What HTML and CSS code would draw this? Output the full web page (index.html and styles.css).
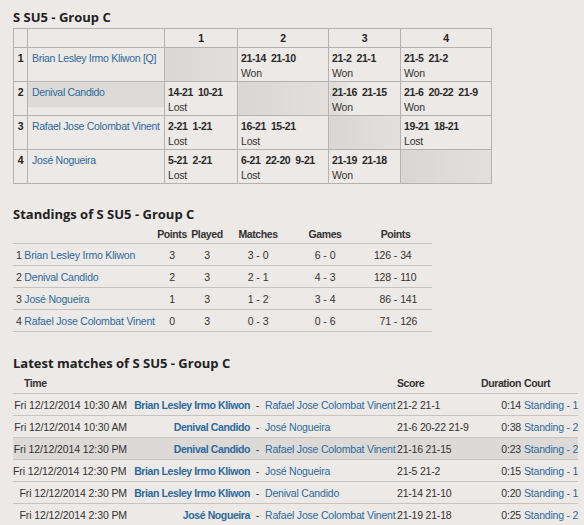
FILE: index.html
```html
<!DOCTYPE html>
<html>
<head>
<meta charset="utf-8">
<link rel="stylesheet" href="styles.css">
</head>
<body>
<h2 class="title">S SU5 - Group C</h2>
<table class="draw">
  <colgroup>
    <col class="c-num"><col class="c-name"><col class="c-s1"><col class="c-s2"><col class="c-s3"><col class="c-s4">
  </colgroup>
  <thead>
    <tr><th></th><th></th><th>1</th><th>2</th><th>3</th><th>4</th></tr>
  </thead>
  <tbody>
    <tr>
      <td class="num">1</td><td class="name"><a href="#">Brian Lesley Irmo Kliwon [Q]</a></td>
      <td class="self"></td>
      <td><b>21-14&nbsp; 21-10</b><br>Won</td>
      <td><b>21-2&nbsp; 21-1</b><br>Won</td>
      <td><b>21-5&nbsp; 21-2</b><br>Won</td>
    </tr>
    <tr>
      <td class="num">2</td><td class="name hover"><a href="#">Denival Candido</a></td>
      <td><b>14-21&nbsp; 10-21</b><br>Lost</td>
      <td class="self"></td>
      <td class="hover-edge"><b>21-16&nbsp; 21-15</b><br>Won</td>
      <td><b>21-6&nbsp; 20-22&nbsp; 21-9</b><br>Won</td>
    </tr>
    <tr>
      <td class="num">3</td><td class="name"><a href="#">Rafael Jose Colombat Vinent</a></td>
      <td><b>2-21&nbsp; 1-21</b><br>Lost</td>
      <td><b>16-21&nbsp; 15-21</b><br>Lost</td>
      <td class="self"></td>
      <td><b>19-21&nbsp; 18-21</b><br>Lost</td>
    </tr>
    <tr>
      <td class="num">4</td><td class="name"><a href="#">José Nogueira</a></td>
      <td><b>5-21&nbsp; 2-21</b><br>Lost</td>
      <td><b>6-21&nbsp; 22-20&nbsp; 9-21</b><br>Lost</td>
      <td><b>21-19&nbsp; 21-18</b><br>Won</td>
      <td class="self"></td>
    </tr>
  </tbody>
</table>

<h2 class="title sec">Standings of S SU5 - Group C</h2>
<table class="standings">
  <colgroup>
    <col class="s-name"><col class="s-pts"><col class="s-pl"><col class="s-m"><col class="s-g"><col class="s-p">
  </colgroup>
  <thead>
    <tr><th></th><th>Points</th><th>Played</th><th>Matches</th><th>Games</th><th>Points</th></tr>
  </thead>
  <tbody>
    <tr><td class="pname">1 <a href="#">Brian Lesley Irmo Kliwon</a></td><td>3</td><td>3</td>
      <td><span class="pair"><span class="l">3</span><span class="d">-</span><span class="r">0</span></span></td>
      <td><span class="pair"><span class="l">6</span><span class="d">-</span><span class="r">0</span></span></td>
      <td><span class="pair"><span class="l">126</span><span class="d">-</span><span class="r">34</span></span></td></tr>
    <tr><td class="pname">2 <a href="#">Denival Candido</a></td><td>2</td><td>3</td>
      <td><span class="pair"><span class="l">2</span><span class="d">-</span><span class="r">1</span></span></td>
      <td><span class="pair"><span class="l">4</span><span class="d">-</span><span class="r">3</span></span></td>
      <td><span class="pair"><span class="l">128</span><span class="d">-</span><span class="r">110</span></span></td></tr>
    <tr><td class="pname">3 <a href="#">José Nogueira</a></td><td>1</td><td>3</td>
      <td><span class="pair"><span class="l">1</span><span class="d">-</span><span class="r">2</span></span></td>
      <td><span class="pair"><span class="l">3</span><span class="d">-</span><span class="r">4</span></span></td>
      <td><span class="pair"><span class="l">86</span><span class="d">-</span><span class="r">141</span></span></td></tr>
    <tr><td class="pname">4 <a href="#">Rafael Jose Colombat Vinent</a></td><td>0</td><td>3</td>
      <td><span class="pair"><span class="l">0</span><span class="d">-</span><span class="r">3</span></span></td>
      <td><span class="pair"><span class="l">0</span><span class="d">-</span><span class="r">6</span></span></td>
      <td><span class="pair"><span class="l">71</span><span class="d">-</span><span class="r">126</span></span></td></tr>
  </tbody>
</table>

<h2 class="title sec2">Latest matches of S SU5 - Group C</h2>
<table class="matches">
  <colgroup>
    <col class="m-time"><col class="m-p1"><col class="m-sep"><col class="m-p2"><col class="m-score"><col class="m-dur"><col class="m-court">
  </colgroup>
  <thead>
    <tr><th class="time">Time</th><th></th><th></th><th></th><th class="score">Score</th><th class="dur">Duration</th><th class="court">Court</th></tr>
  </thead>
  <tbody>
    <tr><td class="time">Fri 12/12/2014 10:30 AM</td><td class="p1"><a href="#">Brian Lesley Irmo Kliwon</a></td><td class="sep">-</td><td class="p2"><a href="#">Rafael Jose Colombat Vinent</a></td><td class="score">21-2 21-1</td><td class="dur">0:14</td><td class="court"><a href="#">Standing - 1</a></td></tr>
    <tr><td class="time">Fri 12/12/2014 10:30 AM</td><td class="p1"><a href="#">Denival Candido</a></td><td class="sep">-</td><td class="p2"><a href="#">José Nogueira</a></td><td class="score">21-6 20-22 21-9</td><td class="dur">0:38</td><td class="court"><a href="#">Standing - 2</a></td></tr>
    <tr class="hl"><td class="time">Fri 12/12/2014 12:30 PM</td><td class="p1"><a href="#">Denival Candido</a></td><td class="sep">-</td><td class="p2"><a href="#">Rafael Jose Colombat Vinent</a></td><td class="score">21-16 21-15</td><td class="dur">0:23</td><td class="court"><a href="#">Standing - 2</a></td></tr>
    <tr><td class="time shift">Fri 12/12/2014 12:30 PM</td><td class="p1"><a href="#">Brian Lesley Irmo Kliwon</a></td><td class="sep">-</td><td class="p2"><a href="#">José Nogueira</a></td><td class="score">21-5 21-2</td><td class="dur">0:15</td><td class="court"><a href="#">Standing - 1</a></td></tr>
    <tr><td class="time">Fri 12/12/2014 2:30 PM</td><td class="p1"><a href="#">Brian Lesley Irmo Kliwon</a></td><td class="sep">-</td><td class="p2"><a href="#">Denival Candido</a></td><td class="score">21-14 21-10</td><td class="dur">0:20</td><td class="court"><a href="#">Standing - 1</a></td></tr>
    <tr><td class="time">Fri 12/12/2014 2:30 PM</td><td class="p1"><a href="#">José Nogueira</a></td><td class="sep">-</td><td class="p2"><a href="#">Rafael Jose Colombat Vinent</a></td><td class="score">21-19 21-18</td><td class="dur">0:25</td><td class="court"><a href="#">Standing - 2</a></td></tr>
  </tbody>
</table>
</body>
</html>
```
FILE: styles.css
```css
html, body {
  background: #ece9e6;
}
body {
  margin: 0;
  padding: 7px 13px 0;
  font: 10.5px "Liberation Sans", Arial, sans-serif;
  letter-spacing: -0.2px;
  color: #333;
}
b, th, .matches td.p1 {
  letter-spacing: -0.4px;
}
a {
  color: #2d6a9c;
  text-decoration: none;
}
.title {
  font: bold 13px/20px "Open Sans", sans-serif;
  letter-spacing: 0;
  color: #222;
  margin: 0 0 1px;
}
.title.sec {
  margin-top: 20px;
  margin-bottom: 0;
}
.title.sec2 {
  margin-top: 21px;
  margin-bottom: 0;
}

/* draw table */
.draw {
  border-collapse: collapse;
  table-layout: fixed;
  width: 478px;
}
.draw th, .draw td {
  border: 1px solid #b4b1ae;
  padding: 0 3px;
  text-align: left;
  vertical-align: top;
}
.draw thead tr { height: 19px; }
.draw th {
  font-weight: bold;
  text-align: center;
  vertical-align: middle;
  color: #222;
}
.draw tbody tr { height: 33px; }
.draw td {
  padding-top: 3px;
  line-height: 15px;
  white-space: nowrap;
}
.draw td b { color: #2a2a2a; }
.draw td.num {
  font-weight: bold;
  text-align: center;
  padding: 3px 0 0;
  color: #222;
}
.draw td.name { padding-left: 4px; letter-spacing: -0.3px; }
.draw td.self {
  background: linear-gradient(to right, #d9d6d3, #e2dfdc);
}
.draw td.hover {
  background: linear-gradient(to bottom, #dddad7 0, #dddad7 25px, transparent 25px);
}
.draw td.hover-edge {
  background: linear-gradient(to right, #dddad7 0, #e6e3e0 16px, transparent 22px);
}
.c-num { width: 14px; }
.c-name { width: 137px; }
.c-s1 { width: 73px; }
.c-s2 { width: 91px; }
.c-s3 { width: 72px; }
.c-s4 { width: 91px; }

/* standings */
.standings {
  border-collapse: collapse;
  table-layout: fixed;
  width: 419px;
}
.standings th {
  font-weight: bold;
  color: #333;
  text-align: center;
  height: 19px;
  padding: 0;
  border-bottom: 1px solid #c6c3c0;
}
.standings td {
  height: 21px;
  padding: 0;
  text-align: center;
  border-bottom: 1px solid #c6c3c0;
}
.standings td.pname {
  text-align: left;
  padding-left: 3px;
  white-space: nowrap;
}
.s-name { width: 142px; }
.s-pts { width: 34px; }
.s-pl { width: 36px; }
.s-m { width: 66px; }
.s-g { width: 68px; }
.s-p { width: 73px; }
.pair {
  display: inline-flex;
}
.pair .l { width: 20px; text-align: right; }
.pair .d { padding: 0 3px; }
.pair .r { width: 20px; text-align: left; }

/* matches */
.matches {
  border-collapse: collapse;
  table-layout: fixed;
  width: 565px;
}
.matches th {
  font-weight: bold;
  color: #333;
  height: 20px;
  padding: 0;
  text-align: left;
  border-bottom: 1px solid #c6c3c0;
}
.matches td {
  height: 21px;
  padding: 0;
  white-space: nowrap;
  border-bottom: 1px solid #c6c3c0;
}
.matches tr.hl td { background: #dcd9d6; }
.matches th.time { padding-left: 11px; }
.matches td.time { text-align: right; padding-right: 3px; letter-spacing: -0.1px; }
.matches td.time.shift { padding-right: 10px; }
.matches td.p1 { text-align: right; font-weight: bold; }
.matches td.sep { text-align: center; }
.matches td.p2 { padding-left: 0; }
.matches .score { padding-left: 2px; }
.matches .dur { text-align: right; }
.matches .court { padding-left: 3px; }
.m-time { width: 117px; }
.m-p1 { width: 120px; }
.m-sep { width: 15px; }
.m-p2 { width: 130px; }
.m-score { width: 81px; }
.m-dur { width: 45px; }
.m-court { width: 57px; }
```
